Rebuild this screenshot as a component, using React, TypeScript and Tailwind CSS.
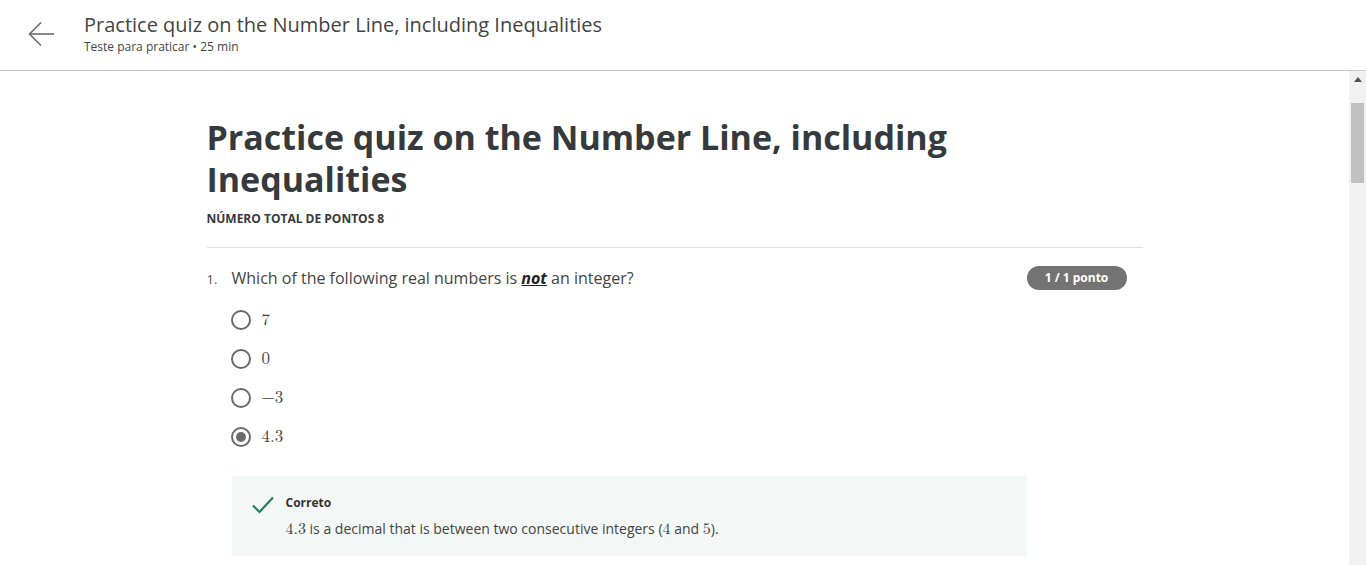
import { useState } from 'react';

const sans = "font-['Open_Sans',_'Liberation_Sans',_sans-serif]";
const serif = "font-['Latin_Modern_Math','DejaVu_Serif','Liberation_Serif',_serif]";

const options = ['7', '0', '\u22123', '4.3'];

const Radio = ({ checked }: { checked: boolean }) => (
  <span className="flex h-5 w-5 items-center justify-center rounded-full border-2 border-[#6a6a6a] bg-white">
    {checked && <span className="h-[10px] w-[10px] rounded-full bg-[#6a6a6a]" />}
  </span>
);

const App = () => {
  const [selected, setSelected] = useState(3);

  return (
    <div className={`flex h-[565px] flex-col overflow-hidden bg-white text-[#333] ${sans}`}>
      {/* Header */}
      <header className="flex h-[71px] shrink-0 items-start border-b border-[#c8c8c8] bg-white">
        <button className="ml-[27px] mt-[21px] flex h-[26px] w-[28px] items-center justify-center text-[#6b6b6b]">
          <svg width="27" height="26" viewBox="0 0 27 26" fill="none" stroke="currentColor" strokeWidth="1.6">
            <path d="M26 13H2" />
            <path d="M13 1.5 1.5 13 13 24.5" />
          </svg>
        </button>
        <div className="ml-[29px] mt-[11px] flex flex-col">
          <h1 className="text-[20px] leading-[28px] text-[#444]">
            Practice quiz on the Number Line, including Inequalities
          </h1>
          <p className="text-[12px] leading-[16px] text-[#444]">Teste para praticar • 25 min</p>
        </div>
      </header>

      <div className="flex min-h-0 flex-1">
        {/* Content */}
        <main className="flex-1 overflow-hidden">
          <div className="mx-auto w-[936px] pt-[45px]">
            <h2 className="text-[34px] font-bold leading-[42px] text-[#373a3c]">
              Practice quiz on the Number Line, including Inequalities
            </h2>
            <p className="mt-[11px] text-[12px] font-bold uppercase leading-[16px] text-[#373a3c]">
              Número total de pontos 8
            </p>
            <div className="mt-[20px] border-t border-[#e1e1e1]" />

            <div className="flex items-start justify-between pr-4 pt-[18px]">
              <div className="flex items-baseline">
                <span className="w-[25px] text-[13px] text-[#555]">1.</span>
                <p className="text-[16px] leading-[24px] text-[#444]">
                  Which of the following real numbers is{' '}
                  <em className="font-bold text-[#222] underline">not</em> an integer?
                </p>
              </div>
              <span className="flex h-6 w-[100px] items-center justify-center rounded-full bg-[#737373] text-[12px] font-bold text-white">
                1 / 1 ponto
              </span>
            </div>

            <div className="ml-[24px] mt-[10px] flex flex-col">
              {options.map((o, i) => (
                <label
                  key={o}
                  onClick={() => setSelected(i)}
                  className="flex h-[39px] cursor-pointer items-center gap-[11px]"
                >
                  <Radio checked={selected === i} />
                  <span className={`${serif} text-[17px] text-[#444]`}>{o}</span>
                </label>
              ))}
            </div>

            <div className="ml-[25px] mt-[20px] flex h-[80px] w-[795px] items-start gap-3 bg-[#f3f8f6] pl-5 pt-[18px]">
              <svg width="22" height="18" viewBox="0 0 22 18" fill="none" stroke="#1f8354" strokeWidth="2.2" className="mt-[2px]">
                <path d="M1 9.5 7.5 16 21 1.5" />
              </svg>
              <div className="flex flex-col">
                <p className="text-[12px] font-bold leading-[18px] text-[#333]">Correto</p>
                <p className="mt-[7px] text-[14px] leading-[20px] text-[#444]">
                  <span className={`${serif} text-[16px]`}>4.3</span> is a decimal that is between two
                  consecutive integers (<span className={`${serif} text-[16px]`}>4</span> and{' '}
                  <span className={`${serif} text-[16px]`}>5</span>).
                </p>
              </div>
            </div>
          </div>
        </main>

        {/* Scrollbar */}
        <div className="flex w-[17px] shrink-0 flex-col items-center bg-[#f1f1f1]">
          <div className="flex h-[17px] w-full items-center justify-center">
            <svg width="8" height="5" viewBox="0 0 8 5">
              <path d="M0 5 4 0 8 5Z" fill="#505050" />
            </svg>
          </div>
          <div className="mt-[15px] h-[80px] w-[13px] bg-[#c1c1c1]" />
        </div>
      </div>
    </div>
  );
};

export default App;
